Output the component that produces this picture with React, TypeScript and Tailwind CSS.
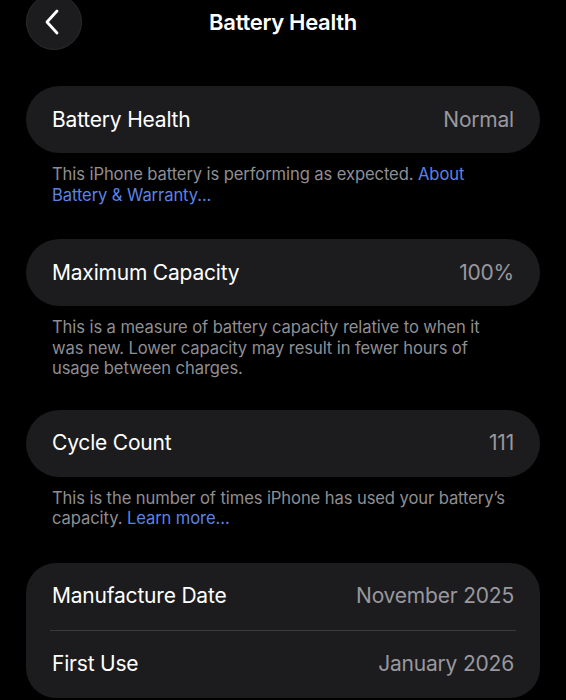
import React from "react";

const font = { fontFamily: 'Inter, "Noto Sans", "Liberation Sans", sans-serif' };

function Row({ label, value }: { label: string; value: string }) {
  return (
    <div className="flex items-center justify-between h-[67px] px-[26px]">
      <span className="text-white text-[21px] tracking-[-0.2px]">{label}</span>
      <span className="text-[#98989e] text-[21px] tracking-[-0.2px]">{value}</span>
    </div>
  );
}

function Footer({ children }: { children: React.ReactNode }) {
  return (
    <p className="pl-[52px] pr-[30px] pt-[11px] text-[16.6px] leading-[20.5px] text-[#8e8e93] tracking-[-0.1px] whitespace-nowrap">
      {children}
    </p>
  );
}

export default function App() {
  return (
    <div className="w-[566px] h-[700px] bg-black overflow-hidden" style={font}>
      <div className="grid grid-cols-[1fr_auto_1fr] grid-rows-[44px] items-center h-[44px] px-[26px]">
        <div className="flex">
          <div className="w-[56px] h-[56px] -my-[6px] shrink-0 rounded-full bg-[#1c1c1e] border border-[#2c2c2e] flex items-center justify-center">
            <svg width="16" height="26" viewBox="0 0 16 26" fill="none" className="ml-[-4px]">
              <path d="M13 2 L3 13 L13 24" stroke="white" strokeWidth="2.8" strokeLinecap="round" strokeLinejoin="round" />
            </svg>
          </div>
        </div>
        <h1 className="text-white text-[22px] font-semibold tracking-[-0.3px]">Battery Health</h1>
        <div />
      </div>

      <div className="px-[26px] pt-[42px]">
        <div className="rounded-full bg-[#1c1c1e]">
          <Row label="Battery Health" value="Normal" />
        </div>
      </div>
      <Footer>
        This iPhone battery is performing as expected.{" "}
        <span className="text-[#5b83e6]">About</span>
        <br />
        <span className="text-[#5b83e6]">Battery &amp; Warranty...</span>
      </Footer>

      <div className="px-[26px] pt-[34px]">
        <div className="rounded-full bg-[#1c1c1e]">
          <Row label="Maximum Capacity" value="100%" />
        </div>
      </div>
      <Footer>
        This is a measure of battery capacity relative to when it
        <br />
        was new. Lower capacity may result in fewer hours of
        <br />
        usage between charges.
      </Footer>

      <div className="px-[26px] pt-[31px]">
        <div className="rounded-full bg-[#1c1c1e]">
          <Row label="Cycle Count" value="111" />
        </div>
      </div>
      <Footer>
        This is the number of times iPhone has used your battery’s
        <br />
        capacity. <span className="text-[#5b83e6]">Learn more...</span>
      </Footer>

      <div className="px-[26px] pt-[34px]">
        <div className="rounded-[30px] bg-[#1c1c1e] overflow-hidden">
          <Row label="Manufacture Date" value="November 2025" />
          <div className="mx-[24px] h-px bg-[#3a3a3c]" />
          <Row label="First Use" value="January 2026" />
        </div>
      </div>
    </div>
  );
}
